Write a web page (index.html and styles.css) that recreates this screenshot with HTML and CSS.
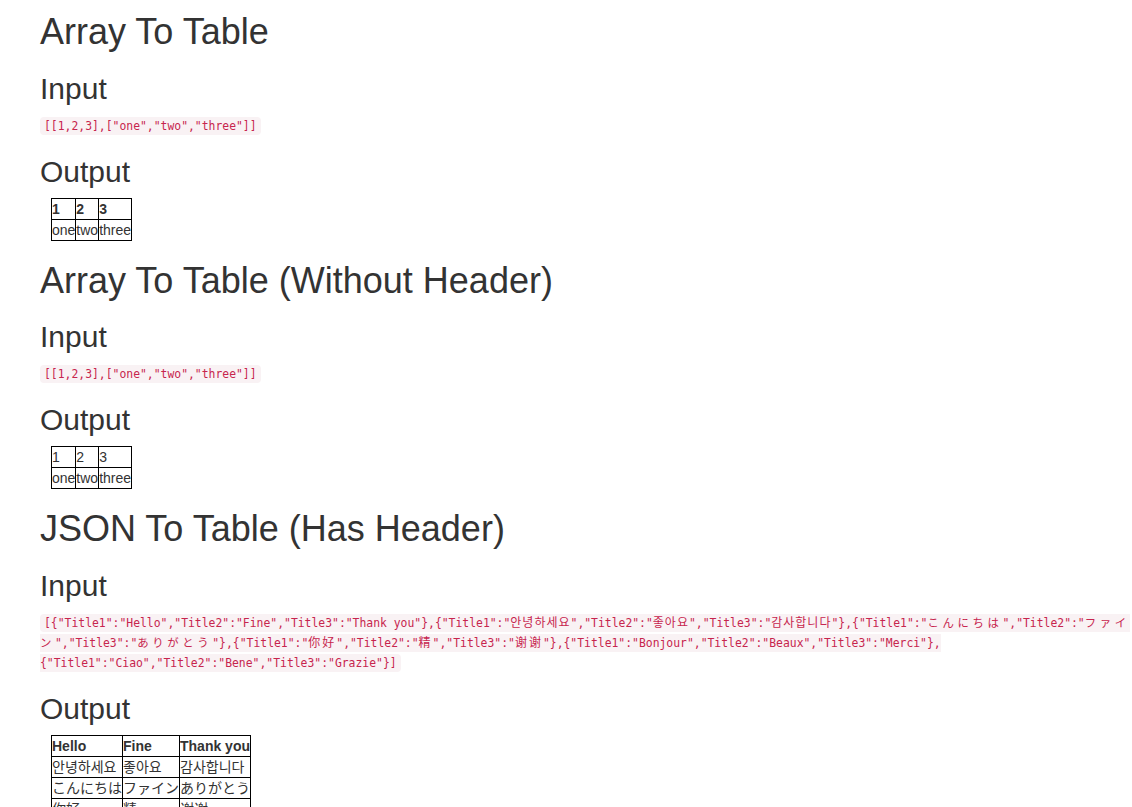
FILE: index.html
```html
<!DOCTYPE html>
<html lang="en">
<head>
<meta charset="utf-8">
<title>Array To Table</title>
<link rel="stylesheet" href="styles.css">
</head>
<body>
<div class="page">
  <h1 class="heading heading-first">Array To Table</h1>
  <h2 class="subheading">Input</h2>
  <div class="code-block"><code class="code">[[1,2,3],["one","two","three"]]</code></div>
  <h2 class="subheading">Output</h2>
  <table class="data-table">
    <tr><th>1</th><th>2</th><th>3</th></tr>
    <tr><td>one</td><td>two</td><td>three</td></tr>
  </table>

  <h1 class="heading">Array To Table (Without Header)</h1>
  <h2 class="subheading">Input</h2>
  <div class="code-block"><code class="code">[[1,2,3],["one","two","three"]]</code></div>
  <h2 class="subheading">Output</h2>
  <table class="data-table">
    <tr><td>1</td><td>2</td><td>3</td></tr>
    <tr><td>one</td><td>two</td><td>three</td></tr>
  </table>

  <h1 class="heading">JSON To Table (Has Header)</h1>
  <h2 class="subheading">Input</h2>
  <div class="code-block code-wrap"><code class="code">[{"Title1":"Hello","Title2":"Fine","Title3":"Thank you"},{"Title1":"<span class="ko">안녕하세요</span>","Title2":"<span class="ko">좋아요</span>","Title3":"<span class="ko">감사합니다</span>"},{"Title1":"<span class="ja">こんにちは</span>","Title2":"<span class="ja">ファイ</span><br><span class="ja">ン</span>","Title3":"<span class="ja">ありがとう</span>"},{"Title1":"<span class="zh">你好</span>","Title2":"<span class="zh">精</span>","Title3":"<span class="zh">谢谢</span>"},{"Title1":"Bonjour","Title2":"Beaux","Title3":"Merci"},<br>{"Title1":"Ciao","Title2":"Bene","Title3":"Grazie"}]</code></div>
  <h2 class="subheading">Output</h2>
  <table class="data-table">
    <tr><th>Hello</th><th>Fine</th><th>Thank you</th></tr>
    <tr><td>안녕하세요</td><td>좋아요</td><td>감사합니다</td></tr>
    <tr><td>こんにちは</td><td>ファイン</td><td>ありがとう</td></tr>
    <tr><td>你好</td><td>精</td><td>谢谢</td></tr>
    <tr><td>Bonjour</td><td>Beaux</td><td>Merci</td></tr>
    <tr><td>Ciao</td><td>Bene</td><td>Grazie</td></tr>
  </table>
</div>
</body>
</html>
```

FILE: styles.css
```css
html {
  overflow: hidden;
}

body {
  margin: 0;
  background: #fff;
  color: #333;
  font-family: "Liberation Sans", "Noto Sans CJK KR", sans-serif;
  font-size: 14px;
  line-height: 20px;
}

.page {
  padding: 12px 0 40px 40px;
}

.heading {
  font-family: "Liberation Sans", "Noto Sans CJK KR", sans-serif;
  font-weight: 500;
  font-size: 36px;
  line-height: 1.1;
  margin: 20px 0 10px;
  color: #333;
}

.heading-first {
  margin-top: 0;
}

.subheading {
  font-family: "Liberation Sans", "Noto Sans CJK KR", sans-serif;
  font-weight: 500;
  font-size: 30px;
  line-height: 1.1;
  margin: 20px 0 10px;
  color: #333;
}

.code-block {
  line-height: 20px;
}

.code-wrap {
  white-space: nowrap;
}

.code {
  font-family: "DejaVu Sans Mono", "Noto Sans CJK KR", monospace;
  font-size: 11.4px;
  line-height: 14px;
  padding: 2px 4px;
  color: #c7254e;
  background-color: #f9f2f4;
  border-radius: 4px;
}

.ko {
  font-family: "Noto Sans CJK KR", sans-serif;
  font-size: 12px;
  letter-spacing: 1px;
  line-height: 14px;
}

.ja {
  font-family: "Noto Sans CJK JP", sans-serif;
  font-size: 11.4px;
  letter-spacing: 3.6px;
  line-height: 14px;
}

.zh {
  font-family: "Noto Sans CJK SC", sans-serif;
  font-size: 12px;
  letter-spacing: 2px;
  line-height: 14px;
}

.data-table {
  border-collapse: collapse;
  border-spacing: 0;
  margin-left: 11px;
  font-size: 14px;
  line-height: 20px;
}

.data-table th,
.data-table td {
  border: 1px solid #000;
  padding: 0;
  text-align: left;
  vertical-align: top;
}

.data-table th {
  font-weight: bold;
}
```
